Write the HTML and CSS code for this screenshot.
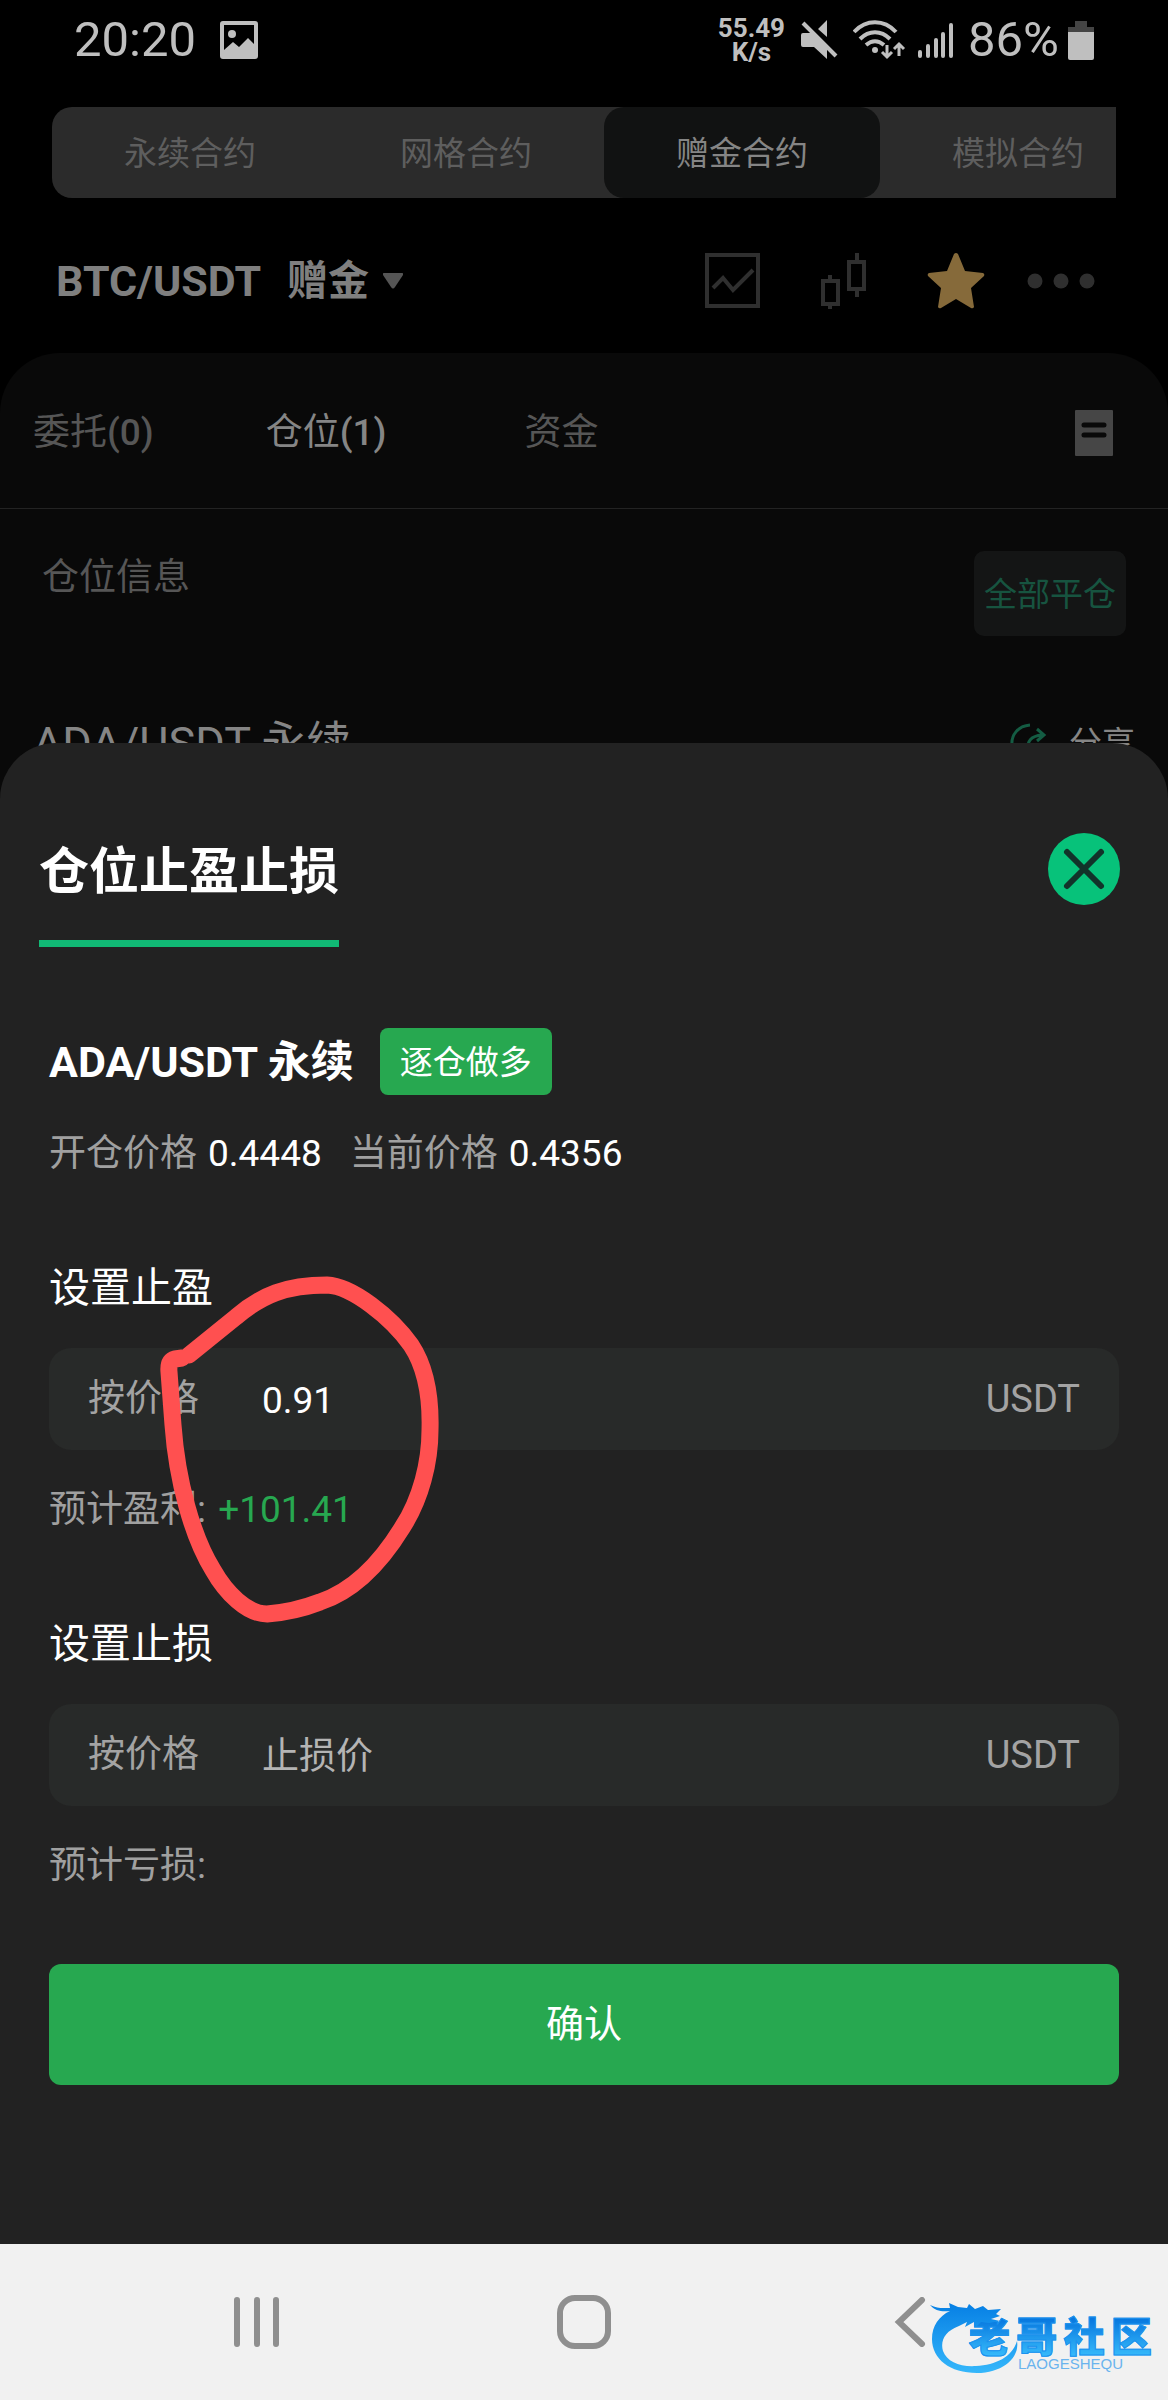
FILE: index.html
```html
<!DOCTYPE html>
<html lang="zh-CN">
<head>
<meta charset="utf-8">
<meta name="viewport" content="width=device-width, initial-scale=1">
<title>仓位止盈止损</title>
<link rel="stylesheet" href="styles.css">
</head>
<body>
<div class="screen">
  <div class="backdrop">
    <div class="status">
      <span class="status-text">20:20</span>
      <svg class="status-picture" width="38" height="38" viewBox="0 0 38 38" fill="currentColor"><path fill-rule="evenodd" d="M3 0h32a3 3 0 0 1 3 3v32a3 3 0 0 1-3 3H3a3 3 0 0 1-3-3V3a3 3 0 0 1 3-3zM4 4v25l9-8 6 5 9-9 6 6V4z"/><circle cx="12" cy="13" r="4"/></svg>
      <span class="net-speed">55.49<br>K/s</span>
      <svg class="icon-mute" width="38" height="40" viewBox="0 0 38 40" fill="currentColor"><path d="M17 9L26 0V17zM2 13H12L26 29V39L13 27H2a2 2 0 0 1-2-2V15a2 2 0 0 1 2-2z"/><path d="M2 3l33 33" stroke="currentColor" stroke-width="4"/></svg>
      <svg class="icon-wifi" width="53" height="40" viewBox="0 0 53 40" fill="none" stroke="currentColor" stroke-width="4"><path d="M1 12c12-13 30-13 42 0M7 19c9-9 21-9 30 0M13 25c6-5 12-5 18 0"/><circle cx="22" cy="30" r="3" fill="currentColor" stroke="none"/><path d="M34 25v12M29 32l5 5 5-5M46 36V24M41 29l5-5 5 5" stroke-width="3"/></svg>
      <svg class="icon-signal" width="36" height="36" viewBox="0 0 36 36" stroke="currentColor" stroke-width="4" stroke-linecap="round"><path d="M2 30v4M10 24v10M18 18v16M25 12v22M33 3v31"/></svg>
      <span class="status-text">86%</span>
      <svg class="icon-battery" width="26" height="39" viewBox="0 0 26 39"><path d="M7 0h12v6h7v6H0V6h7z" fill="#444"/><path d="M0 11h26v26a2 2 0 0 1-2 2H2a2 2 0 0 1-2-2z" fill="#bfbfbf"/></svg>
    </div>

    <nav class="segments" aria-label="合约类型">
      <a class="segment" href="#perp">永续合约</a>
      <a class="segment" href="#grid">网格合约</a>
      <a class="segment segment-active" href="#bonus">赠金合约</a>
      <a class="segment" href="#demo">模拟合约</a>
    </nav>

    <header class="pair-bar">
      <button class="pair" type="button"><span>BTC/USDT</span><span class="pair-kind">赠金</span><svg width="20" height="16" viewBox="0 0 20 16"><path d="M1 0h18q2 0 1 2l-8 12q-2 3-4 0L0 2Q-1 0 1 0z" fill="#555"/></svg></button>
      <div class="pair-tools">
        <button type="button" aria-label="行情图"><svg width="56" height="56" viewBox="0 0 56 56" fill="none" stroke="currentColor" stroke-width="4"><rect x="2" y="2" width="51" height="51"/><path d="M8 35l10-10 10 12 20-20"/></svg></button>
        <button type="button" aria-label="K线"><svg width="46" height="56" viewBox="0 0 46 56" fill="none" stroke="currentColor" stroke-width="4"><path d="M2 28h15v23H2zM28 9h15v27H28zM9 22v6M9 51v5M36 0v9M36 36v8"/></svg></button>
        <button class="tool-star" type="button" aria-label="收藏"><svg width="58" height="56" viewBox="0 0 58 56"><path d="M27 1q2-2 4 0l7 17 18 2q2 1 1 3L44 35l3 19q-1 2-3 1L29 46 14 55q-2 1-3-1l3-19L1 23q-1-2 1-3l18-2z" fill="#866a3a"/></svg></button>
        <button type="button" aria-label="更多"><svg width="68" height="16" viewBox="0 0 68 16" fill="currentColor"><circle cx="8" cy="8" r="7.5"/><circle cx="34" cy="8" r="7.5"/><circle cx="60" cy="8" r="7.5"/></svg></button>
      </div>
    </header>

    <section class="panel">
      <nav class="panel-tabs" aria-label="账户">
        <a class="panel-tab" href="#orders">委托<span class="count">(0)</span></a>
        <a class="panel-tab panel-tab-active" href="#positions">仓位<span class="count">(1)</span></a>
        <a class="panel-tab" href="#funds">资金</a>
        <button class="records" type="button" aria-label="记录"><svg width="38" height="46" viewBox="0 0 38 46"><rect width="38" height="46" rx="1" fill="#464646"/><path d="M9 15h20M9 25h20" stroke="#090909" stroke-width="5" stroke-linecap="round"/></svg></button>
      </nav>
      <div class="panel-head">
        <span>仓位信息</span>
        <button class="close-all" type="button">全部平仓</button>
      </div>
      <div class="position">
        <span class="position-name">ADA/USDT 永续</span>
        <a class="share" href="#share"><svg width="38" height="42" viewBox="0 0 38 42" fill="none" stroke="#145c43" stroke-width="3"><path d="M20 2C8 3 1 12 2 22c1 9 8 17 17 17s15-6 17-16"/><path d="M18 27c-1-9 3-14 14-15M27 6l7 6-7 6"/></svg>分享</a>
      </div>
    </section>
  </div>

  <main class="sheet" role="dialog" aria-labelledby="sheet-title">
    <div class="sheet-head">
      <h1 class="sheet-title" id="sheet-title">仓位止盈止损</h1>
      <button class="sheet-close" type="button" aria-label="关闭"><svg width="72" height="72" viewBox="0 0 72 72"><circle cx="36" cy="36" r="36" fill="#07c27a"/><path d="M19 19l34 34M53 19L19 53" stroke="#12332a" stroke-width="6" stroke-linecap="round"/></svg></button>
    </div>

    <form class="form">
      <div class="symbol-row">
        <h2 class="symbol">ADA/USDT 永续</h2>
        <span class="badge">逐仓做多</span>
      </div>
      <div class="prices">
        <span class="price">开仓价格 <b class="price-value">0.4448</b></span>
        <span class="price">当前价格 <b class="price-value">0.4356</b></span>
      </div>

      <section class="target">
        <h3 class="target-title">设置止盈</h3>
        <div class="field">
          <label class="field-label" for="take-profit">按价格</label>
          <input class="field-input" id="take-profit" type="text" inputmode="decimal" value="0.91">
          <span class="field-unit">USDT</span>
        </div>
        <p class="estimate">预计盈利: <span class="gain">+101.41</span></p>
        <svg class="marker" width="285" height="360" viewBox="155 1270 285 360" fill="none" stroke="#ff5050" stroke-width="17" stroke-linecap="round" stroke-linejoin="round"><path d="M189 1355L236 1317C262 1295 286 1285 327 1285C352 1286 391 1317 411 1345C425 1366 431 1395 430 1430C430 1462 421 1499 402 1528C378 1567 350 1592 320 1602C302 1609 280 1613 267 1614C247 1614 226 1593 213 1570C192 1536 177 1480 173 1425L169 1372Q168 1361 175 1359L182 1358"/></svg>
      </section>

      <section class="target">
        <h3 class="target-title">设置止损</h3>
        <div class="field">
          <label class="field-label" for="stop-loss">按价格</label>
          <input class="field-input" id="stop-loss" type="text" inputmode="decimal" placeholder="止损价">
          <span class="field-unit">USDT</span>
        </div>
        <p class="estimate">预计亏损:</p>
      </section>

      <button class="confirm" type="button">确认</button>
    </form>
  </main>

  <footer class="system-nav">
    <button type="button" aria-label="最近任务"><svg width="48" height="50" viewBox="0 0 48 50" stroke="currentColor" stroke-width="6" stroke-linecap="round"><path d="M4 3v44M24 3v44M43 3v44"/></svg></button>
    <button type="button" aria-label="主屏幕"><svg width="54" height="54" viewBox="0 0 54 54" fill="none" stroke="currentColor" stroke-width="6"><rect x="3" y="3" width="48" height="48" rx="15"/></svg></button>
    <button type="button" aria-label="返回"><svg width="48" height="50" viewBox="0 0 48 50" fill="none" stroke="currentColor" stroke-width="6" stroke-linecap="round"><path d="M35 3L12 25l23 22"/></svg></button>
    <div class="watermark">
      <svg class="watermark-dragon" width="92" height="72" viewBox="0 0 92 72">
        <defs><linearGradient id="dragon-blue" x1="0" y1="0" x2="0" y2="1"><stop offset="0" stop-color="#067fe4"/><stop offset="1" stop-color="#35b7fb"/></linearGradient></defs>
        <path fill="url(#dragon-blue)" d="M0 4c8 4 13 3 20 3L19 2l9 4 9 1 2-4 6 5 8-3 5 4 13-1-5 5 4 2-9 3 9 2-11 2-8-1-5 5-2-5-9 5 2-5-8 4C15 30 10 40 13 50c4 11 17 16 33 15 20-1 36-9 41-25 3 17-15 32-40 32C20 72 2 58 2 38 2 25 9 15 20 10 12 11 5 10 0 4z"/>
      </svg>
      <div class="watermark-name"><span>老</span><span>哥</span><span>社</span><span>区</span></div>
      <div class="watermark-latin">LAOGESHEQU</div>
    </div>
  </footer>
</div>
</body>
</html>
```
FILE: styles.css
```css
* { box-sizing: border-box; }

body {
  margin: 0;
  background: #000;
  color: #fff;
  font-family: Roboto, "Noto Sans CJK SC", sans-serif;
  font-size: 37px;
  line-height: 54px;
}

button, input { font: inherit; color: inherit; }
button { border: 0; padding: 0; background: none; }
a { color: inherit; text-decoration: none; }
h1, h2, h3, p { margin: 0; }
svg { display: block; flex: none; }

.screen { display: flex; flex-direction: column; min-height: 100vh; }

/* Trading page, dimmed behind the sheet */
.backdrop { overflow: hidden; }

.status {
  display: flex;
  align-items: center;
  height: 80px;
  padding: 0 74px;
  color: #bfbfbf;
}
.status-text { font-size: 49px; }
.status-picture { margin-left: 24px; }
.net-speed {
  margin-left: auto;
  font-size: 26px;
  font-weight: 700;
  line-height: 24px;
  text-align: center;
}
.icon-mute { margin-left: 16px; }
.icon-wifi { margin: 0 12px 0 14px; }
.icon-signal { margin-right: 14px; }
.icon-battery { margin-left: 9px; }

.segments {
  display: flex;
  margin: 27px 52px 0;
  overflow: hidden;
  border-radius: 20px 0 0 20px;
  background: #2b2b2b;
  color: #5e5e5e;
  font-size: 33px;
}
.segment {
  flex: 0 0 276px;
  padding-top: 2px;
  line-height: 89px;
  text-align: center;
}
.segment-active {
  border-radius: 20px;
  background: #111212;
  color: #858585;
}

.pair-bar {
  display: flex;
  align-items: center;
  justify-content: space-between;
  height: 155px;
  padding: 10px 73px 0 56px;
}
.pair {
  display: flex;
  align-items: center;
  color: #7f7f7f;
  font-size: 43px;
  font-weight: 700;
}
.pair-kind { margin: 0 14px 0 26px; font-size: 41px; }
.pair-tools { display: flex; align-items: center; color: #2f2f2f; }
.pair-tools button { margin-left: 42px; }
.pair-tools button:nth-child(2) { margin-left: 60px; }
.pair-tools .tool-star { margin-left: 60px; }

.panel {
  padding-bottom: 29px;
  border-radius: 60px 60px 0 0;
  background: #090909;
  color: #565656;
}
.panel-tabs {
  display: flex;
  align-items: center;
  height: 156px;
  padding: 5px 55px 0 33px;
  border-bottom: 1px solid #232323;
}
.panel-tab { margin-right: 112px; }
.panel-tab-active { margin-right: 138px; color: #858585; }
.count { font-weight: 500; }
.records { margin-left: auto; }

.panel-head {
  display: flex;
  align-items: flex-start;
  justify-content: space-between;
  padding: 42px 42px 0;
}
.close-all {
  padding: 2px 10px 0;
  border-radius: 10px;
  background: #141515;
  color: #175440;
  font-size: 33px;
  line-height: 83px;
}

.position {
  display: flex;
  justify-content: space-between;
  margin-top: 78px;
  padding: 0 33px;
  color: #858585;
  line-height: 60px;
}
.position-name { font-size: 45px; }
.share { display: flex; align-items: center; gap: 21px; font-size: 33px; }

/* Take-profit / stop-loss sheet */
.sheet {
  position: relative;
  flex: 1;
  margin-top: -60px;
  padding-top: 90px;
  border-radius: 56px 56px 0 0;
  background: #222;
}
.sheet-head {
  display: flex;
  align-items: flex-start;
  justify-content: space-between;
  padding: 0 48px 0 39px;
}
.sheet-title {
  padding: 2px 0 31px;
  border-bottom: 7px solid #11b975;
  font-size: 50px;
  font-weight: 700;
  line-height: 74px;
}

.form { padding: 81px 49px 60px; }
.symbol-row { display: flex; align-items: center; gap: 26px; }
.symbol { font-size: 43px; font-weight: 700; }
.badge {
  padding: 2px 20px 0;
  border-radius: 8px;
  background: #27a850;
  font-size: 33px;
  line-height: 65px;
}
.prices { display: flex; gap: 28px; margin-top: 32px; color: #a0a0a0; }
.price { display: flex; gap: 11px; }
.price-value { color: #fff; font-weight: 400; }

.target { position: relative; margin-top: 77px; }
.target-title { font-size: 41px; font-weight: 400; line-height: 60px; }
.field {
  display: flex;
  align-items: center;
  height: 102px;
  margin-top: 30px;
  padding: 0 39px;
  border-radius: 22px;
  background: #282a29;
  color: #a3a3a3;
}
.field-label { flex: 0 0 174px; }
.field-input {
  flex: 1;
  min-width: 0;
  height: 100%;
  padding: 2px 0 0;
  border: 0;
  outline: 0;
  background: none;
  color: #fff;
}
.field-input::placeholder { color: #b4b4b4; opacity: 1; }
.field-unit { font-size: 38px; }
.estimate { margin-top: 33px; color: #a0a0a0; }
.gain { margin-left: 3px; color: #27a850; }

/* Hand-drawn circle over the take-profit value */
.marker { position: absolute; top: 12px; left: 106px; pointer-events: none; }

.confirm {
  display: block;
  width: 100%;
  margin-top: 71px;
  border-radius: 12px;
  background: #27a850;
  font-size: 38px;
  line-height: 121px;
}

/* System navigation */
.system-nav {
  position: relative;
  display: grid;
  grid-template-columns: repeat(3, 28%);
  align-items: center;
  justify-content: center;
  justify-items: center;
  height: 156px;
  background: #f1f1f1;
  color: #8f8f8f;
}
.watermark {
  position: absolute;
  right: 16px;
  bottom: 27px;
  width: 222px;
  height: 70px;
  color: #1488ea;
}
.watermark-dragon { position: absolute; left: 0; bottom: 0; }
.watermark-name {
  display: flex;
  justify-content: space-between;
  margin-left: 39px;
  padding-top: 16px;
  background: linear-gradient(#0878df 30%, #38bcfb);
  background-clip: text;
  color: transparent;
  -webkit-text-stroke: 1px #1c92ee;
  font-size: 41px;
  font-weight: 900;
  line-height: 38px;
}
.watermark-latin {
  position: relative;
  margin-left: 88px;
  color: #6ab4ee;
  font-family: "Liberation Sans", sans-serif;
  font-size: 15px;
  line-height: 13px;
}
```
